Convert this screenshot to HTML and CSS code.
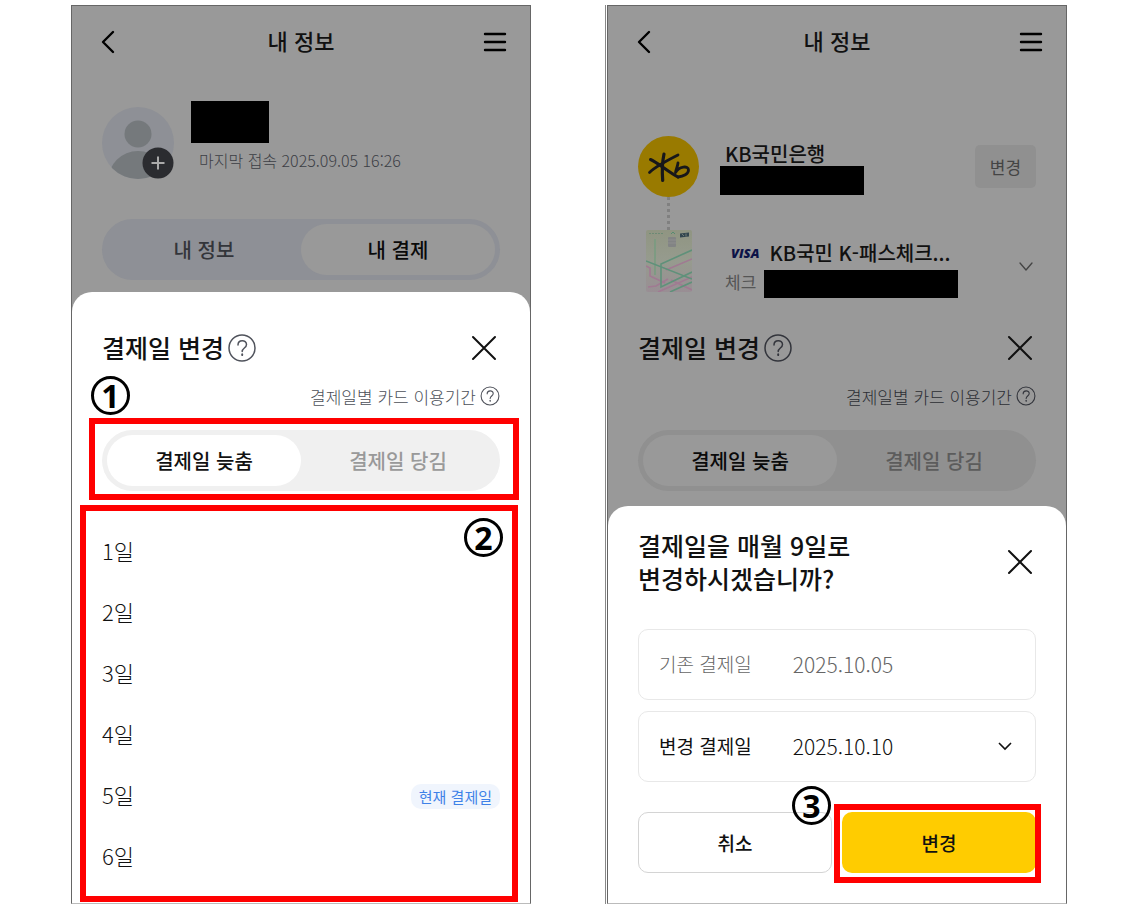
FILE: index.html
```html
<!DOCTYPE html>
<html lang="ko">
<head>
<meta charset="utf-8">
<meta name="viewport" content="width=device-width, initial-scale=1">
<title>결제일 변경</title>
<link rel="stylesheet" href="styles.css">
</head>
<body>
<main class="guide">

  <section class="phone" aria-label="결제일 선택">
    <header class="topbar">
      <button class="icon-btn" aria-label="뒤로"><svg width="14" height="24" viewBox="0 0 14 24"><path d="M12 2 2 12l10 10"/></svg></button>
      <h1 class="topbar-title">내 정보</h1>
      <button class="icon-btn" aria-label="메뉴"><svg width="24" height="20" viewBox="0 0 24 20"><path d="M2 2h20M2 10h20M2 18h20"/></svg></button>
    </header>
    <div class="profile">
      <svg class="avatar" width="72" height="72" viewBox="0 0 72 72" aria-hidden="true">
        <clipPath id="face"><circle cx="36" cy="36" r="36"/></clipPath>
        <circle cx="36" cy="36" r="36" fill="#8e9096"/>
        <circle cx="36" cy="27" r="13.5" fill="#75797c"/>
        <circle cx="36" cy="74" r="30" fill="#75797c" clip-path="url(#face)"/>
        <circle cx="56" cy="56" r="15.500" fill="#2b2c30"/>
        <path d="M49.500 56h13M56 49.500v13" stroke="#aaa" stroke-width="2" fill="none"/>
      </svg>
      <div class="profile-info">
        <div class="mask mask-name"></div>
        <p class="last-login">마지막 접속 2025.09.05 16:26</p>
      </div>
    </div>
    <div class="segment segment-dim segment-blue">
      <button class="segment-item">내 정보</button>
      <button class="segment-item is-active">내 결제</button>
    </div>

    <div class="sheet sheet-list">
      <div class="title-row">
        <h2 class="title">결제일 변경</h2>
        <button class="icon-btn help" aria-label="도움말"><svg width="28" height="28" viewBox="0 0 28 28"><circle cx="14" cy="14" r="13"/><path d="M10 11c0-5.500 8.500-5.500 8.500-.5 0 3.500-4.300 3.500-4.300 7"/><path d="M14.200 20.200v1" stroke-width="1.800"/></svg></button>
        <button class="icon-btn close" aria-label="닫기"><svg width="26" height="26" viewBox="0 0 26 26"><path d="m2 2 22 22M24 2 2 24"/></svg></button>
      </div>
      <div class="period">
        <span>결제일별 카드 이용기간</span>
        <button class="icon-btn help" aria-label="이용기간 도움말"><svg width="20" height="20" viewBox="0 0 28 28"><circle cx="14" cy="14" r="12.500"/><path d="M10 11c0-5.500 8.500-5.500 8.500-.5 0 3.500-4.300 3.500-4.300 7"/><path d="M14.200 20v1.500"/></svg></button>
      </div>
      <div class="marked">
        <div class="segment">
          <button class="segment-item is-active">결제일 늦춤</button>
          <button class="segment-item">결제일 당김</button>
        </div>
        <div class="frame frame-segment"></div>
        <span class="step step-1">1</span>
      </div>
      <div class="marked days-block">
        <ul class="days">
          <li><button class="day">1일</button></li>
          <li><button class="day">2일</button></li>
          <li><button class="day">3일</button></li>
          <li><button class="day">4일</button></li>
          <li><button class="day">5일<span class="badge">현재 결제일</span></button></li>
          <li><button class="day">6일</button></li>
        </ul>
        <div class="frame frame-days"></div>
        <span class="step step-2">2</span>
      </div>
    </div>
  </section>

  <section class="phone phone-confirm" aria-label="결제일 변경 확인">
    <header class="topbar">
      <button class="icon-btn" aria-label="뒤로"><svg width="14" height="24" viewBox="0 0 14 24"><path d="M12 2 2 12l10 10"/></svg></button>
      <h1 class="topbar-title">내 정보</h1>
      <button class="icon-btn" aria-label="메뉴"><svg width="24" height="20" viewBox="0 0 24 20"><path d="M2 2h20M2 10h20M2 18h20"/></svg></button>
    </header>
    <div class="account">
      <svg width="61" height="61" viewBox="0 0 61 61" aria-label="KB">
        <circle cx="30.500" cy="30.500" r="30.500" fill="#997a00"/>
        <g fill="none" stroke="#17171a" stroke-linecap="round" stroke-linejoin="round">
          <path d="M26 18c-1.500 7-2 18-1.300 26.500" stroke-width="3.200"/>
          <path d="M12.500 23.500C19 26 30 36 40 41" stroke-width="3"/>
          <path d="M40 19C30 24 18 30 11.500 36.500" stroke-width="2.800"/>
          <path d="M40 27c-.5 4-2 6-2.500 9.500C41 30.500 50.500 29 50.500 34c0 4-5 6.500-10.500 7" stroke-width="2.800"/>
        </g>
      </svg>
      <div class="bank-info">
        <strong class="name bank-name">KB국민은행</strong>
        <div class="mask mask-bank"></div>
      </div>
      <button class="change">변경</button>
    </div>
    <div class="connector"></div>
    <div class="account account-card">
      <svg class="card" width="46" height="62" viewBox="0 0 46 62" aria-hidden="true">
        <defs><linearGradient id="plate" x1="0" y1="0" x2="0" y2="1"><stop offset="0" stop-color="#909582"/><stop offset=".5" stop-color="#969b8e"/><stop offset="1" stop-color="#998e94"/></linearGradient></defs>
        <rect width="46" height="62" rx="2" fill="url(#plate)"/>
        <g fill="none" stroke-width="1.600">
          <path d="M0 36l4 2v8l15 7M46 29 20 40M2 57l8-1 12-7M12 62l34-15M25 50l21 10" stroke="#a07a92"/>
          <path d="M9 9v36" stroke="#789c80"/>
          <path d="M0 31l46 18M46 20 15 34v23l31-15M24 62l22-10" stroke="#5f917a"/>
        </g>
        <path d="M3 3.500h14" stroke="#6d8a75" stroke-dasharray="2 1"/>
        <path d="m25 4 2-2 2 2" fill="none" stroke="#568b70"/>
        <rect x="22" y="7" width="8" height="10" rx="1" fill="#828484"/>
        <path d="M22 10h8M22 13h8" stroke="#999" stroke-width=".5"/>
        <path d="m34 3.500 9-1v4l-9 1z" fill="#33474f"/>
        <path d="m36 4 2 2M40 3.500v3" stroke="#8a9488" stroke-width=".7"/>
      </svg>
      <div class="card-info">
        <div class="card-line"><span class="visa">VISA</span><strong class="name">KB국민 K-패스체크...</strong></div>
        <div class="card-sub"><span>체크</span><div class="mask mask-card"></div></div>
      </div>
      <button class="icon-btn expand" aria-label="펼치기"><svg width="14" height="10" viewBox="0 0 14 10"><path d="m1 1 6 7 6-7"/></svg></button>
    </div>
    <div class="dimmed">
      <div class="title-row">
        <h2 class="title">결제일 변경</h2>
        <button class="icon-btn help" aria-label="도움말"><svg width="28" height="28" viewBox="0 0 28 28"><circle cx="14" cy="14" r="13"/><path d="M10 11c0-5.500 8.500-5.500 8.500-.5 0 3.500-4.300 3.500-4.300 7"/><path d="M14.200 20.200v1" stroke-width="1.800"/></svg></button>
        <button class="icon-btn close" aria-label="닫기"><svg width="26" height="26" viewBox="0 0 26 26"><path d="m2 2 22 22M24 2 2 24"/></svg></button>
      </div>
      <div class="period">
        <span>결제일별 카드 이용기간</span>
        <button class="icon-btn help" aria-label="이용기간 도움말"><svg width="20" height="20" viewBox="0 0 28 28"><circle cx="14" cy="14" r="12.500"/><path d="M10 11c0-5.500 8.500-5.500 8.500-.5 0 3.500-4.300 3.500-4.300 7"/><path d="M14.200 20v1.500"/></svg></button>
      </div>
      <div class="segment segment-dim">
        <button class="segment-item is-active">결제일 늦춤</button>
        <button class="segment-item">결제일 당김</button>
      </div>
    </div>

    <form class="sheet sheet-confirm">
      <div class="title-row">
        <h2 class="title">결제일을 매월 9일로<br>변경하시겠습니까?</h2>
        <button type="button" class="icon-btn close" aria-label="닫기"><svg width="26" height="26" viewBox="0 0 26 26"><path d="m2 2 22 22M24 2 2 24"/></svg></button>
      </div>
      <div class="fields">
        <div class="field field-old">
          <label for="old-date">기존 결제일</label>
          <input id="old-date" class="value" value="2025.10.05" readonly>
        </div>
        <div class="field">
          <label for="new-date">변경 결제일</label>
          <select id="new-date" class="value"><option>2025.10.10</option></select>
          <svg class="chevron" width="16" height="10" viewBox="0 0 16 10" aria-hidden="true"><path d="m2 2 6 6 6-6"/></svg>
        </div>
      </div>
      <div class="actions">
        <button type="button" class="action">취소</button>
        <div class="marked">
          <button type="button" class="action action-primary">변경</button>
          <div class="frame frame-action"></div>
          <span class="step step-3">3</span>
        </div>
      </div>
    </form>
  </section>

</main>
</body>
</html>
```
FILE: styles.css
```css
* { box-sizing: border-box; }

body {
  margin: 0;
  background: #fff;
  color: #111;
  font-family: "Noto Sans CJK KR", sans-serif;
  font-size: 20px;
}

h1, h2, p, ul { margin: 0; padding: 0; }
ul { list-style: none; }

button, input, select {
  margin: 0;
  padding: 0;
  border: 0;
  background: none;
  color: inherit;
  font: inherit;
}

svg { display: block; flex: none; }

.guide {
  display: grid;
  grid-template-columns: 1fr 1fr;
  gap: 76px;
  padding: 5px 70px 5px 71px;
}

.phone {
  display: flex;
  flex-direction: column;
  border: 1px solid #666;
  border-bottom-color: #bbb;
  background: #999;
}

.phone-confirm { box-shadow: -1px 0 #fff, -2px 0 #888; }

.icon-btn { flex: none; }
.icon-btn svg {
  fill: none;
  stroke: #111;
  stroke-width: 2;
  stroke-linecap: round;
  stroke-linejoin: round;
}

.topbar {
  display: flex;
  align-items: center;
  justify-content: space-between;
  height: 72px;
  padding: 0 23px 0 29px;
}
.topbar .icon-btn svg { stroke: #000; stroke-width: 2.400; }
.topbar-title {
  padding: 0 0 4px 4px;
  font-size: 22px;
  font-weight: 500;
  line-height: 32px;
}

.mask { background: #000; }
.mask-name { width: 78px; height: 42px; }
.mask-bank { width: 144px; height: 29px; }
.mask-card { width: 194px; height: 28px; }

.profile {
  display: flex;
  align-items: flex-start;
  gap: 17px;
  height: 118px;
  padding: 0 30px;
  margin-top: 23px;
}
.avatar { margin-top: 6px; }
.last-login {
  padding: 5px 0 0 8px;
  color: #3c3e45;
  font-size: 16px;
  font-weight: 300;
  line-height: 24px;
}

.segment {
  display: grid;
  grid-template-columns: 1fr 1fr;
  height: 61px;
  padding: 5px;
  border-radius: 31px;
  background: #f0f0f0;
}
.segment-item {
  border-radius: 26px;
  color: #999;
  font-weight: 500;
}
.segment-item.is-active { background: #fff; color: #111; }
.segment-dim { background: #909090; }
.segment-dim .segment-item { color: #5c5c5c; }
.segment-dim .segment-item.is-active { background: #999; color: #0a0a0a; }
.segment-blue { margin: 0 30px 12px; background: #8e9096; }
.segment-blue .segment-item { color: #33353a; }

.sheet {
  flex: 1;
  border-radius: 20px 20px 0 0;
  background: #fff;
}
.sheet-list { padding: 39px 30px 16px; }
.sheet-confirm { margin-top: 15px; padding: 23px 30px 30px; }
.dimmed { padding: 0 30px; }

.title-row { display: flex; align-items: center; gap: 4px; }
.title { font-size: 25px; font-weight: 500; line-height: 33px; }
.close { margin-left: auto; margin-right: 3px; }
.help svg { stroke: #50535c; stroke-width: 1.500; }

.period {
  display: flex;
  align-items: center;
  justify-content: flex-end;
  gap: 4px;
  height: 24px;
  margin: 20px 0 22px;
  color: #4c4f58;
  font-size: 17px;
  font-weight: 300;
}
.dimmed .period { color: #2c2e34; }
.dimmed .help svg { stroke: #33353c; }

/* Numbered walkthrough marks laid over the screens */
.marked { position: relative; }
.frame {
  position: absolute;
  border: 6px solid #f00;
  pointer-events: none;
}
.frame-segment { inset: -12px -19px -9px -13px; }
.frame-days { inset: -16px -18px -15px -22px; }
.frame-action { inset: -8px -5px -10px -8px; }
.step {
  position: absolute;
  display: flex;
  align-items: center;
  justify-content: center;
  width: 39px;
  height: 39px;
  border: 3px solid #000;
  border-radius: 50%;
  color: #000;
  font-family: "Open Sans", sans-serif;
  font-size: 32px;
  font-weight: 700;
  line-height: 33px;
}
.step-1 { top: -54px; left: -11px; }
.step-2 { top: -3px; right: -3px; }
.step-3 { top: -26px; left: -50px; }

.days-block { margin-top: 30px; }
.day {
  display: flex;
  align-items: center;
  justify-content: space-between;
  width: 100%;
  height: 61px;
  padding-bottom: 3px;
  color: #111;
  font-size: 22px;
  font-weight: 300;
}
.badge {
  margin-top: 4px;
  padding: 0 8px;
  border-radius: 10px;
  background: #f0f5fd;
  color: #3f82e8;
  font-size: 15px;
  font-weight: 400;
  line-height: 25px;
}

.account {
  display: grid;
  grid-template-columns: 61px 1fr auto;
  column-gap: 21px;
  margin-top: 58px;
  padding: 0 30px;
}
.account-card { margin: 0 0 33px; }
.name { font-weight: 500; line-height: 24px; }
.bank-info { padding-top: 6px; }
.bank-name { display: block; padding-left: 5px; }
.change {
  align-self: center;
  width: 61px;
  height: 43px;
  border-radius: 5px;
  background: #909090;
  color: #444;
  font-size: 17px;
}
.connector {
  width: 0;
  height: 33px;
  margin-left: 59px;
  border-left: 3px dotted #808080;
}
.card { justify-self: center; }
.card-info { padding-top: 10px; }
.card-line {
  display: flex;
  align-items: center;
  gap: 10px;
  height: 26px;
  padding-left: 11px;
  white-space: nowrap;
}
.visa {
  color: #0c1247;
  font-family: "Open Sans", sans-serif;
  font-size: 13px;
  font-style: italic;
  font-weight: 800;
}
.card-sub {
  display: flex;
  align-items: flex-start;
  gap: 8px;
  height: 28px;
  margin-top: 4px;
  padding-left: 5px;
  color: #555;
  font-size: 17px;
  line-height: 24px;
}
.expand { align-self: center; padding: 5px 3px 0 0; }
.expand svg { stroke: #444; stroke-width: 1.300; }

.fields { display: grid; gap: 11px; margin-top: 34px; }
.field {
  position: relative;
  display: flex;
  align-items: center;
  gap: 41px;
  height: 71px;
  padding: 0 20px 2px;
  border: 1px solid #e8e8e8;
  border-radius: 10px;
}
.field label { flex: none; font-size: 19px; }
.field-old { color: #666; font-weight: 300; }
.value {
  flex: 1;
  min-width: 0;
  appearance: none;
  outline: 0;
  font-size: 21px;
  font-weight: 300;
}
.chevron {
  position: absolute;
  right: 22px;
  fill: none;
  stroke: #111;
  stroke-width: 1.600;
  pointer-events: none;
}

.actions {
  display: grid;
  grid-template-columns: 1fr 1fr;
  gap: 10px;
  margin-top: 30px;
}
.action {
  width: 100%;
  height: 61px;
  border: 1px solid #d4d4d4;
  border-radius: 10px;
  font-size: 19px;
  font-weight: 500;
}
.action-primary { border: 0; background: #fc0; }
```
